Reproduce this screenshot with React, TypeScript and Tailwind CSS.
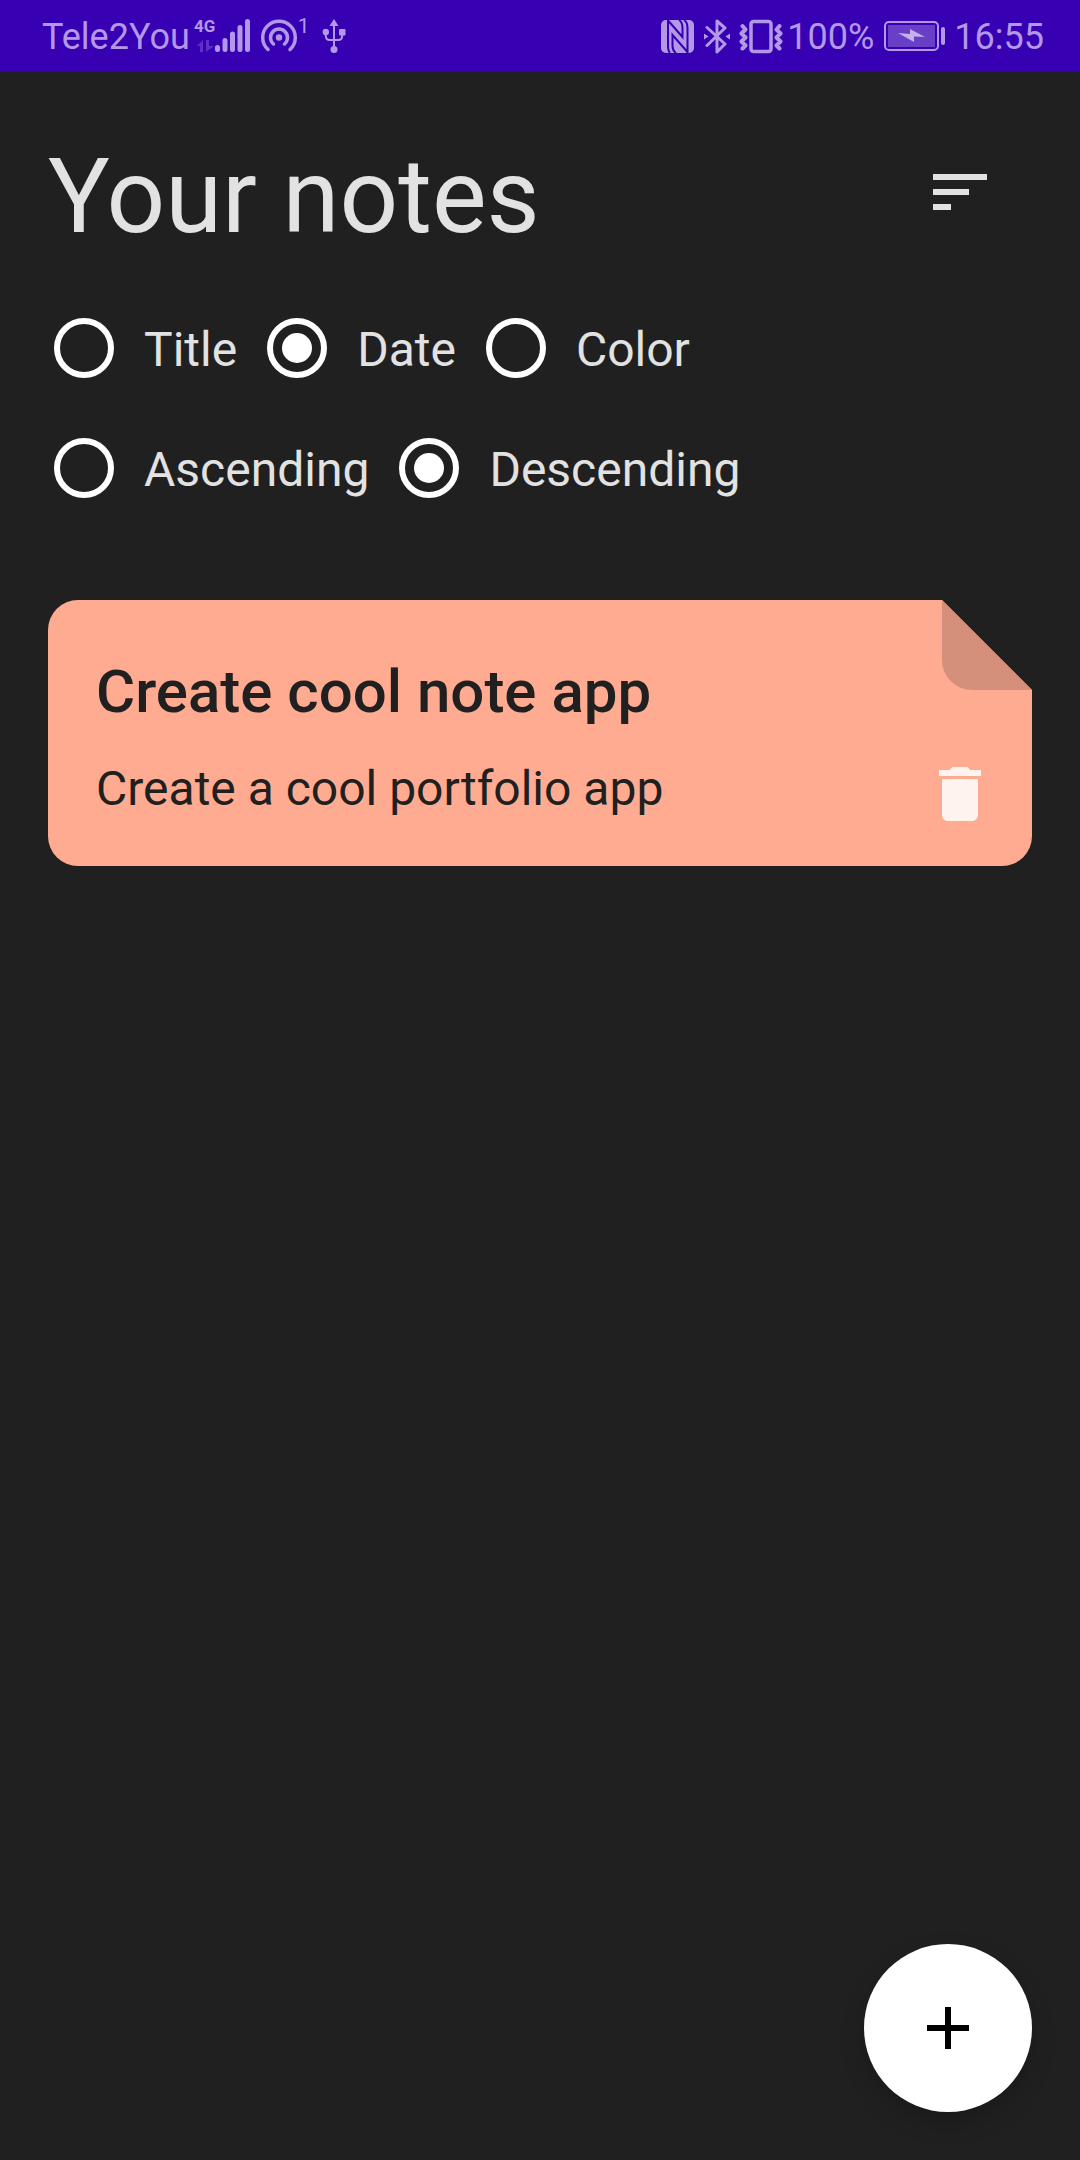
import { useState } from "react";

function StatusBar() {
  return (
    <header className="flex h-[72px] items-center justify-between bg-[#3700b3] pr-9 pl-[42px] text-[36px] leading-[42px] text-[#b398e8]">
      <div className="flex items-center">
        <span className="pt-0.5">Tele2You</span>
        <div className="ml-1.5 flex h-9 w-[18px] flex-col items-center justify-between">
          <span className="text-[17px] leading-4 font-bold">4G</span>
          <svg viewBox="0 0 18 14" className="h-3.5 w-[18px]" fill="#5f30c8" aria-hidden="true">
            <path d="M1 6L7 0V12H4V6ZM10 0H13V6H18L10 12Z" />
          </svg>
        </div>
        <svg viewBox="0 0 36 36" className="size-9" stroke="currentColor" strokeWidth="5" strokeLinecap="round" aria-hidden="true">
          <path d="M3.500 29.500v2M11 22.500v9M18.500 16v15.500M26 9.500v22M33.500 3.500v28" />
        </svg>
        <svg viewBox="0 0 38 36" className="ml-2.5 h-9 w-[38px]" fill="none" stroke="currentColor" strokeWidth="3.500" strokeLinecap="round" aria-hidden="true">
          <path d="M8 31.500A16.300 16.300 0 1 1 30 31.500" />
          <path d="M13.500 26A8.500 8.500 0 1 1 24.500 26" />
          <circle cx="19" cy="19.500" r="3.200" fill="currentColor" stroke="none" />
        </svg>
        <span className="self-start text-[21px] leading-6">1</span>
        <svg viewBox="0 0 24 36" className="ml-3 h-9 w-6" fill="none" stroke="currentColor" strokeWidth="2" aria-hidden="true">
          <path d="M12 6v24M3.800 14v3.500q0 4.500 4 4.500h8.400q4 0 4-4.500V14" />
          <path d="M12 1l4.500 7h-9Z" fill="currentColor" stroke="none" />
          <circle cx="3.800" cy="14" r="3.200" fill="currentColor" stroke="none" />
          <rect x="17" y="11" width="6.500" height="6.500" rx="1" fill="currentColor" stroke="none" />
          <circle cx="12" cy="31.500" r="3.500" fill="currentColor" stroke="none" />
        </svg>
      </div>
      <div className="flex items-center">
        <svg viewBox="0 0 34 34" className="size-[34px]" aria-hidden="true">
          <rect width="33" height="33" y="1" rx="5" fill="currentColor" />
          <path d="M7 1.500L21.500 18V9Q21.500 3 18 1M26.500 33L11.500 16v10Q11.500 32 15 34" fill="none" stroke="#3700b3" strokeWidth="2" />
          <path d="M7 1V26Q7 32 9 34M26.500 34V9Q26.500 3 23 1" fill="none" stroke="#3700b3" strokeWidth="2" />
        </svg>
        <svg viewBox="0 0 28 36" className="ml-2 h-9 w-7" fill="none" stroke="currentColor" strokeWidth="3" strokeLinejoin="round" strokeLinecap="round" aria-hidden="true">
          <path d="M4 9.500L22 26l-8 8V3l8 7L4 27.500" />
          <path d="M1 15.500l4.500 3-4.500 3ZM27 15.500l-4.500 3 4.500 3Z" fill="currentColor" stroke="none" />
        </svg>
        <svg viewBox="0 0 44 36" className="ml-2 h-9 w-11" fill="none" stroke="currentColor" strokeWidth="3.500" strokeLinejoin="round" strokeLinecap="round" aria-hidden="true">
          <rect x="12" y="3.500" width="20" height="30" rx="2.500" />
          <path d="M3.500 8l3 3.500-4 4 4 4-4 4 4 4-3 3M40.500 8l-3 3.500 4 4-4 4 4 4-4 4 3 3" strokeWidth="4" />
        </svg>
        <span className="ml-1 pt-0.5">100%</span>
        <svg viewBox="0 0 62 30" className="ml-2.5 h-[30px] w-[62px]" aria-hidden="true">
          <rect x="1" y="1" width="53" height="28" rx="4" fill="none" stroke="currentColor" strokeWidth="2" />
          <rect x="4" y="4" width="47" height="22" rx="1" fill="#693fc8" />
          <rect x="57" y="6" width="4" height="18" rx="2" fill="currentColor" />
          <path d="M14 12l12 1V8l15 8-11-.500V21Z" fill="#c5b0ea" />
        </svg>
        <span className="ml-2 pt-0.5">16:55</span>
      </div>
    </header>
  );
}

type RadioRowProps = {
  name: string;
  label: string;
  options: string[];
  value: string;
  onChange: (value: string) => void;
};

function RadioRow({ name, label, options, value, onChange }: RadioRowProps) {
  return (
    <div role="radiogroup" aria-label={label} className="flex h-[60px] items-center gap-[30px] px-1.5">
      {options.map((option) => (
        <label key={option} className="flex items-center gap-[30px]">
          <input
            type="radio"
            name={name}
            checked={value === option}
            onChange={() => onChange(option)}
            className="size-[60px] shrink-0 appearance-none rounded-full border-[6px] border-white bg-clip-content p-[9px] checked:bg-white"
          />
          <span className="pt-1 text-[48px] leading-[60px]">{option}</span>
        </label>
      ))}
    </div>
  );
}

function NoteCard({ title, content }: { title: string; content: string }) {
  return (
    <article className="relative rounded-[30px] bg-[#ffab91] px-12 pt-[52px] pb-11 text-[#202020] [clip-path:polygon(0_0,calc(100%-90px)_0,100%_90px,100%_100%,0_100%)]">
      <div className="absolute top-0 right-0 size-[90px] rounded-bl-[30px] bg-[#d5907b]" />
      <h2 className="mr-24 truncate text-[60px] leading-[80px] font-medium">{title}</h2>
      <p className="mt-6 mr-24 text-[48px] leading-[66px]">{content}</p>
      <button type="button" aria-label="Delete note" className="absolute right-9 bottom-9 size-[72px] text-[#fff3ef]">
        <svg viewBox="0 0 24 24" className="size-full" fill="currentColor" aria-hidden="true">
          <path d="M6 19c0 1.100.9 2 2 2h8c1.100 0 2-.9 2-2V7H6v12zM19 4h-3.500l-1-1h-5l-1 1H5v2h14V4z" />
        </svg>
      </button>
    </article>
  );
}

export default function App() {
  const [orderBy, setOrderBy] = useState("Date");
  const [direction, setDirection] = useState("Descending");

  return (
    <div className="min-h-screen bg-[#202020] font-['Roboto',sans-serif] text-[#e2e2e2]">
      <StatusBar />
      <main className="px-12 pt-16">
        <div className="flex items-start justify-between pr-9">
          <h1 className="text-[103px] leading-[122px]">Your notes</h1>
          <button type="button" aria-label="Sort" className="mt-5 size-[72px]">
            <svg viewBox="0 0 24 24" className="size-full" fill="currentColor" aria-hidden="true">
              <path d="M3 18h6v-2H3v2zM3 6v2h18V6H3zm0 7h12v-2H3v2z" />
            </svg>
          </button>
        </div>
        <div className="mt-[60px] mb-[102px] flex flex-col gap-[60px]">
          <RadioRow name="order" label="Order by" options={["Title", "Date", "Color"]} value={orderBy} onChange={setOrderBy} />
          <RadioRow name="direction" label="Direction" options={["Ascending", "Descending"]} value={direction} onChange={setDirection} />
        </div>
        <NoteCard title="Create cool note app" content="Create a cool portfolio app" />
      </main>
      <button
        type="button"
        aria-label="Add note"
        className="fixed right-12 bottom-12 flex size-[168px] items-center justify-center rounded-full bg-white text-black shadow-[0_10px_24px_rgba(0,0,0,0.2)]"
      >
        <svg viewBox="0 0 24 24" className="size-[72px]" fill="currentColor" aria-hidden="true">
          <path d="M19 13h-6v6h-2v-6H5v-2h6V5h2v6h6v2z" />
        </svg>
      </button>
    </div>
  );
}
